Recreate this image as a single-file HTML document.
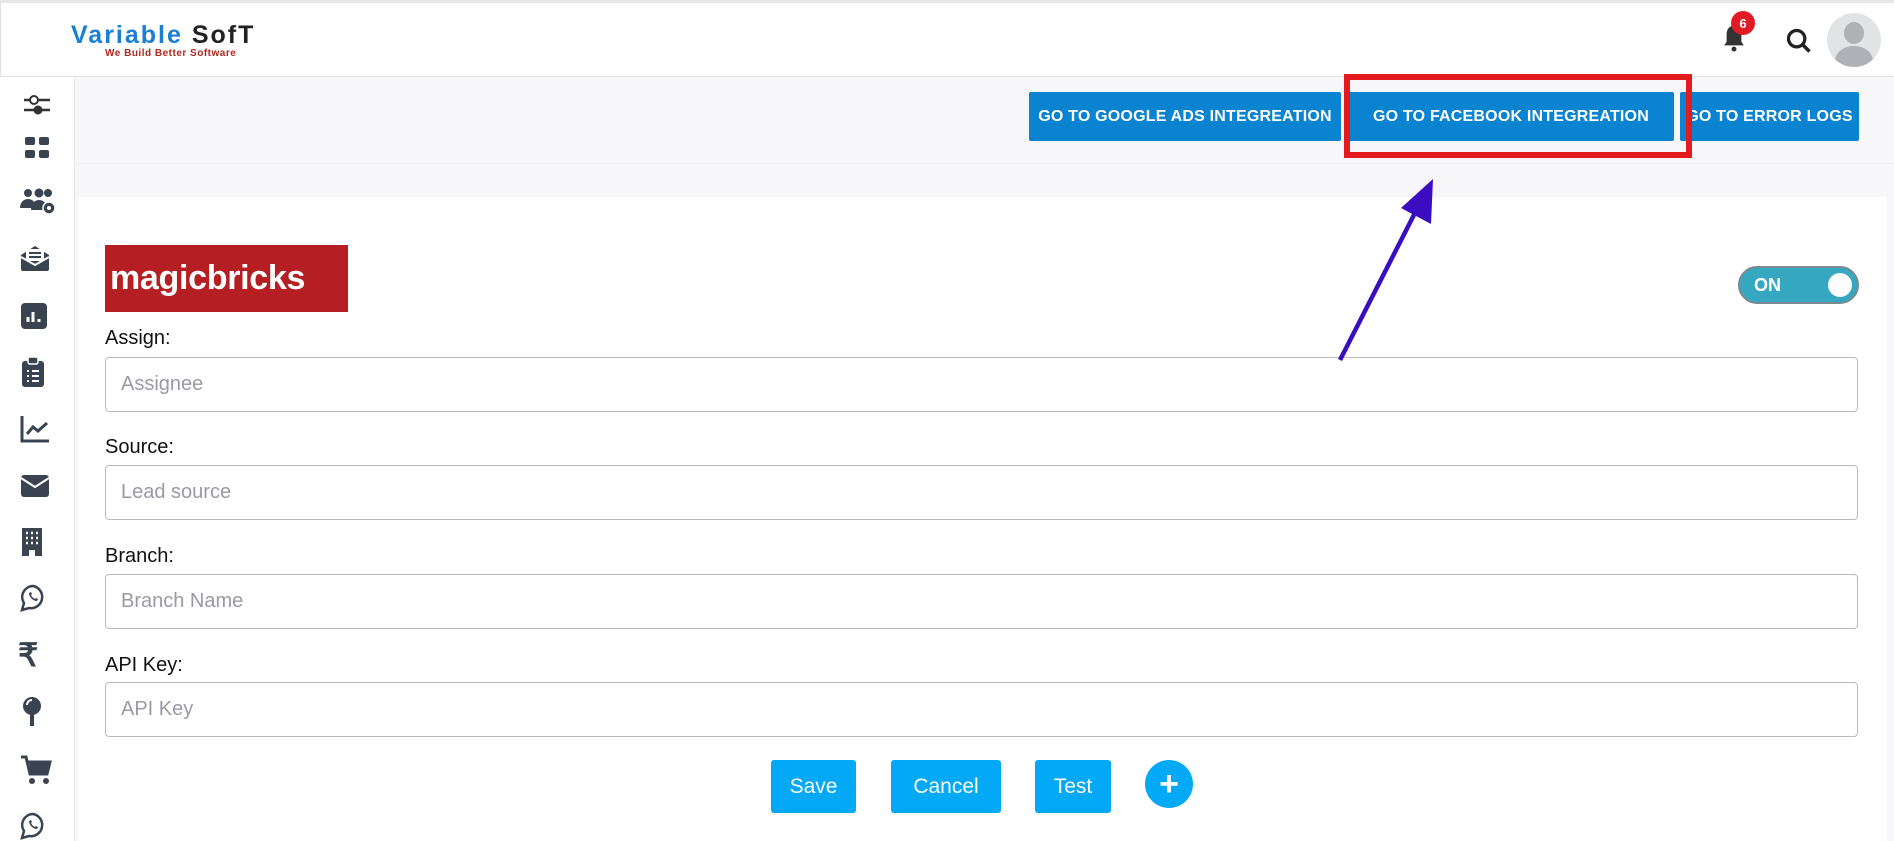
<!DOCTYPE html>
<html><head><style>
*{box-sizing:border-box;margin:0;padding:0}
body{width:1894px;height:841px;overflow:hidden;background:#f7f7f9;font-family:"Liberation Sans",sans-serif;position:relative}
.abs{position:absolute}
.hdr{left:0;top:0;width:1894px;height:77px;background:#fff;border-bottom:1px solid #e2e2e2;border-top:3px solid #e6e6e6}
.logo{left:0;top:3px;width:298px;height:74px;border-left:1px solid #e0e0e0}
.side{left:0;top:77px;width:75px;height:764px;background:#fff;border-right:1px solid #e6e6e6}
.btn{background:#0a84d0;color:#fff;font-weight:bold;font-size:16px;display:flex;align-items:center;justify-content:center;border-radius:2px;letter-spacing:.2px}
.card{left:79px;top:197px;width:1808px;height:644px;background:#fff}
.lbl{left:105px;font-size:20px;color:#111}
.inp{left:105px;width:1753px;height:55px;border:1px solid #bbb;border-radius:4px;font-size:20px;color:#9a9aa6;padding-left:15px;display:flex;align-items:center}
.b2{background:#03a9f4;color:#fff;font-size:21px;display:flex;align-items:center;justify-content:center;border-radius:3px;top:760px;height:53px}
</style></head><body>
<div class="abs hdr"></div>
<div class="abs logo">
<div class="abs" style="left:70px;top:18px;font-size:25px;letter-spacing:2px;color:#1a7fd4;font-weight:bold">Variable <span style="color:#222">SofT</span></div>
<div class="abs" style="left:104px;top:45px;font-size:10px;color:#b3261e;font-weight:bold;letter-spacing:.5px">We Build Better Software</div>
</div>
<svg class="abs" style="left:1719px;top:22px" width="30" height="32" viewBox="0 0 24 26"><path d="M12 3c-4 0-6 3-6 7v6l-2 3h16l-2-3v-6c0-4-2-7-6-7z" fill="#333"/><circle cx="12" cy="22" r="2" fill="#333"/></svg>
<div class="abs" style="left:1731px;top:11px;width:24px;height:24px;border-radius:50%;background:#e01b24;color:#fff;font-size:13px;font-weight:bold;display:flex;align-items:center;justify-content:center">6</div>
<svg class="abs" style="left:1785px;top:26px" width="28" height="30" viewBox="0 0 24 24"><circle cx="10" cy="10" r="7" fill="none" stroke="#222" stroke-width="2.8"/><path d="M15 15l6 6" stroke="#222" stroke-width="3"/></svg>
<div class="abs" style="left:1827px;top:13px;width:54px;height:54px;border-radius:50%;background:#e2e3e5;overflow:hidden"><div class="abs" style="left:17px;top:9px;width:20px;height:22px;border-radius:50%;background:#aeb1b6"></div><div class="abs" style="left:8px;top:33px;width:38px;height:30px;border-radius:50%;background:#aeb1b6"></div></div>
<div class="abs side"></div>
<svg class="abs" style="left:22px;top:93px" width="30" height="24" viewBox="0 0 30 24"><path d="M2 7h26M2 17h26" stroke="#333" stroke-width="2.5"/><circle cx="12" cy="7" r="4" fill="#fff" stroke="#333" stroke-width="2"/><circle cx="16" cy="17" r="4.5" fill="#333"/></svg>
<svg class="abs" style="left:24px;top:135px" width="26" height="26" viewBox="0 0 26 26"><rect x="1" y="2" width="10" height="8" rx="2" fill="#3a4450"/><rect x="15" y="2" width="10" height="8" rx="2" fill="#3a4450"/><rect x="1" y="15" width="10" height="8" rx="2" fill="#3a4450"/><rect x="15" y="15" width="10" height="8" rx="2" fill="#3a4450"/></svg>
<svg class="abs" style="left:19px;top:186px" width="38" height="30" viewBox="0 0 38 30"><circle cx="9" cy="7" r="4" fill="#3a4450"/><circle cx="20" cy="7" r="4.5" fill="#3a4450"/><circle cx="29" cy="7" r="4" fill="#3a4450"/><path d="M1 22c0-6 4-9 8-9s7 3 8 6l-1 3zM12 24c0-7 4-10 8-10s8 3 8 8v2z" fill="#3a4450"/><circle cx="30" cy="22" r="6" fill="#3a4450" stroke="#fff" stroke-width="1.5"/><circle cx="30" cy="22" r="2" fill="#fff"/></svg>
<svg class="abs" style="left:19px;top:243px" width="32" height="30" viewBox="0 0 32 30"><path d="M2 12l14-9 14 9v14a2 2 0 0 1-2 2H4a2 2 0 0 1-2-2z" fill="#3a4450"/><rect x="7" y="6" width="18" height="12" fill="#fff"/><path d="M10 10h12M10 14h12" stroke="#3a4450" stroke-width="2"/><path d="M2 14l14 8 14-8" stroke="#fff" stroke-width="2" fill="none"/></svg>
<svg class="abs" style="left:20px;top:302px" width="28" height="28" viewBox="0 0 28 28"><rect x="1" y="1" width="26" height="26" rx="4" fill="#3a4450"/><path d="M8 20v-5M13 20v-10M19 20v-3" stroke="#fff" stroke-width="3"/></svg>
<svg class="abs" style="left:21px;top:356px" width="24" height="32" viewBox="0 0 24 32"><rect x="1" y="5" width="22" height="26" rx="3" fill="#3a4450"/><rect x="7" y="1" width="10" height="7" rx="2" fill="#3a4450" stroke="#fff" stroke-width="1.5"/><path d="M6 15h2M11 15h7M6 20h2M11 20h7M6 25h2M11 25h7" stroke="#fff" stroke-width="2"/></svg>
<svg class="abs" style="left:20px;top:415px" width="30" height="28" viewBox="0 0 30 28"><path d="M2 1v25h27" stroke="#3a4450" stroke-width="3" fill="none"/><path d="M7 19l6-7 5 4 9-8" stroke="#3a4450" stroke-width="3" fill="none"/></svg>
<svg class="abs" style="left:20px;top:474px" width="30" height="24" viewBox="0 0 30 24"><rect x="1" y="1" width="28" height="22" rx="3" fill="#3a4450"/><path d="M1 4l14 9 14-9" stroke="#fff" stroke-width="2" fill="none"/></svg>
<svg class="abs" style="left:21px;top:527px" width="22" height="30" viewBox="0 0 22 30"><path d="M1 1h20v28h-7v-6h-6v6H1z" fill="#3a4450"/><path d="M5 6h2M10 6h2M15 6h2M5 11h2M10 11h2M15 11h2M5 16h2M10 16h2M15 16h2" stroke="#fff" stroke-width="2.5"/></svg>
<svg class="abs" style="left:20px;top:584px" width="26" height="28" viewBox="0 0 26 28"><path d="M13 2a11 11 0 0 0-9 17l-2 7 7-2A11 11 0 1 0 13 2z" fill="none" stroke="#3a4450" stroke-width="2.5"/><path d="M9 9c0 4 4 8 8 8l1-2-2-1-1 1c-2-1-3-2-4-4l1-1-1-2z" fill="#3a4450"/></svg>
<div class="abs" style="left:18px;top:636px;font-size:32px;font-weight:bold;color:#3a4450">₹</div>
<svg class="abs" style="left:20px;top:696px" width="26" height="32" viewBox="0 0 26 32"><circle cx="12" cy="10" r="9" fill="#3a4450"/><path d="M7 9a5 5 0 0 1 5-5" stroke="#fff" stroke-width="2" fill="none"/><rect x="10" y="18" width="4" height="12" fill="#3a4450"/></svg>
<svg class="abs" style="left:20px;top:755px" width="32" height="30" viewBox="0 0 32 30"><path d="M1 2h5l4 17h17l3-12H8" fill="none" stroke="#3a4450" stroke-width="3"/><path d="M9 7h21l-3 12H11z" fill="#3a4450"/><circle cx="12" cy="26" r="3" fill="#3a4450"/><circle cx="26" cy="26" r="3" fill="#3a4450"/></svg>
<svg class="abs" style="left:20px;top:812px" width="26" height="28" viewBox="0 0 26 28"><path d="M13 2a11 11 0 0 0-9 17l-2 7 7-2A11 11 0 1 0 13 2z" fill="none" stroke="#3a4450" stroke-width="2.5"/><path d="M9 9c0 4 4 8 8 8l1-2-2-1-1 1c-2-1-3-2-4-4l1-1-1-2z" fill="#3a4450"/></svg>
<div class="abs" style="left:75px;top:163px;width:1819px;height:1px;background:#eeeef0"></div>
<div class="abs btn" style="left:1029px;top:92px;width:312px;height:49px">GO TO GOOGLE ADS INTEGREATION</div>
<div class="abs btn" style="left:1348px;top:92px;width:326px;height:49px">GO TO FACEBOOK INTEGREATION</div>
<div class="abs btn" style="left:1680px;top:92px;width:179px;height:49px">GO TO ERROR LOGS</div>
<div class="abs card"></div>
<div class="abs" style="left:105px;top:245px;width:243px;height:67px;background:#b51f24;color:#fff;font-size:34px;font-weight:bold;display:flex;align-items:center;padding-left:5px;letter-spacing:-.3px">magicbricks</div>
<div class="abs" style="left:1738px;top:266px;width:121px;height:38px;border-radius:19px;background:#36a7c1;border:2px solid #7a8a90"><div class="abs" style="left:14px;top:7px;color:#fff;font-weight:bold;font-size:18px">ON</div><div class="abs" style="right:5px;top:5px;width:24px;height:24px;border-radius:50%;background:#fff"></div></div>
<div class="abs lbl" style="top:327px">Assign:</div>
<div class="abs inp" style="top:357px">Assignee</div>
<div class="abs lbl" style="top:436px">Source:</div>
<div class="abs inp" style="top:465px">Lead source</div>
<div class="abs lbl" style="top:545px">Branch:</div>
<div class="abs inp" style="top:574px">Branch Name</div>
<div class="abs lbl" style="top:654px">API Key:</div>
<div class="abs inp" style="top:682px">API Key</div>
<div class="abs b2" style="left:771px;width:85px">Save</div>
<div class="abs b2" style="left:891px;width:110px">Cancel</div>
<div class="abs b2" style="left:1035px;width:76px">Test</div>
<div class="abs" style="left:1145px;top:760px;width:48px;height:48px;border-radius:50%;background:#03a9f4;color:#fff;font-size:34px;font-weight:bold;display:flex;align-items:center;justify-content:center;line-height:1">+</div>
<div class="abs" style="left:1344px;top:74px;width:348px;height:84px;border:6px solid #e31b1f"></div>
<svg class="abs" style="left:0;top:0" width="1894" height="841"><path d="M1340 360L1419 205" stroke="#3a0ec0" stroke-width="4.5"/><path d="M1433 179l-2 45-30-16z" fill="#3a0ec0"/></svg>
</body></html>
